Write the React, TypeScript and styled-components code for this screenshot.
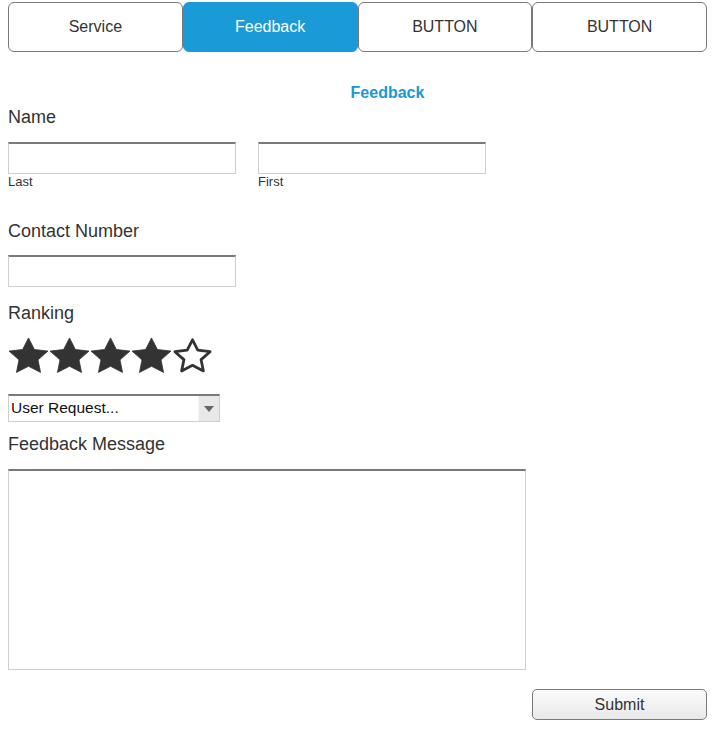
import styled, { createGlobalStyle } from "styled-components";

const GlobalStyle = createGlobalStyle`
  body {
    margin: 0;
    background: #fff;
    font-family: "Liberation Sans", Arial, sans-serif;
    color: #333;
  }
`;

const Page = styled.div`
  padding: 2px 6px 12px 8px;
  width: 699px;
`;

const TabBar = styled.nav`
  display: flex;
`;

const Tab = styled.button<{ $active?: boolean }>`
  flex: 1;
  height: 50px;
  border: 1px solid ${({ $active }) => ($active ? "#1a9bd7" : "#7a7a7a")};
  border-radius: 6px;
  background: ${({ $active }) => ($active ? "#1a9bd7" : "#fff")};
  color: ${({ $active }) => ($active ? "#fff" : "#333")};
  font-family: "Liberation Sans", Arial, sans-serif;
  font-size: 16px;
  padding: 0;
  cursor: pointer;
`;

const Title = styled.h2`
  margin: 31px 0 0;
  padding-left: 60px;
  text-align: center;
  font-size: 16px;
  line-height: 20px;
  font-weight: bold;
  color: #1a98cf;
`;

const Label = styled.div<{ $top: number }>`
  margin-top: ${({ $top }) => $top}px;
  font-size: 18px;
  line-height: 20px;
  color: #333;
`;

const Row = styled.div<{ $top: number }>`
  display: flex;
  gap: 22px;
  margin-top: ${({ $top }) => $top}px;
`;

const Field = styled.div`
  display: flex;
  flex-direction: column;
`;

const TextInput = styled.input`
  box-sizing: border-box;
  width: 228px;
  height: 32px;
  margin: 0;
  border: 1px solid #cfcfcf;
  border-top: 2px solid #7a7a7a;
  background: #fff;
  outline: none;
`;

const SubLabel = styled.span`
  font-size: 13px;
  line-height: 15px;
  color: #333;
`;

const Stars = styled.div`
  display: flex;
  margin-top: 13px;
  height: 39px;
  align-items: flex-start;
`;

const SelectBox = styled.div`
  box-sizing: border-box;
  display: flex;
  width: 212px;
  height: 28px;
  margin-top: 19px;
  border: 1px solid #cfcfcf;
  border-top: 2px solid #7a7a7a;
  background: #fff;
`;

const SelectText = styled.span`
  flex: 1;
  padding-left: 2px;
  font-size: 15.5px;
  line-height: 24px;
  color: #111;
`;

const SelectArrow = styled.span`
  width: 20px;
  display: flex;
  align-items: center;
  justify-content: center;
  background: #e8e8e8;
  border-left: 1px solid #f4f4f4;
`;

const MessageArea = styled.textarea`
  box-sizing: border-box;
  display: block;
  width: 518px;
  height: 201px;
  margin-top: 15px;
  border: 1px solid #cfcfcf;
  border-top: 2px solid #7a7a7a;
  resize: none;
  outline: none;
`;

const Actions = styled.div`
  display: flex;
  justify-content: flex-end;
  margin-top: 19px;
`;

const SubmitButton = styled.button`
  width: 175px;
  height: 31px;
  border: 1px solid #7a7a7a;
  border-radius: 5px;
  background: linear-gradient(#fbfbfb, #e9e9e9);
  font-family: "Liberation Sans", Arial, sans-serif;
  font-size: 16px;
  color: #333;
  cursor: pointer;
`;

// five-pointed star, fat arms like the icon font one
const starPoints = (outer: number, inner: number) => {
  const cx = 20.5;
  const cy = 21;
  const pts: string[] = [];
  for (let i = 0; i < 10; i++) {
    const r = i % 2 === 0 ? outer : inner;
    const a = ((-90 + i * 36) * Math.PI) / 180;
    pts.push(`${(cx + r * Math.cos(a)).toFixed(2)},${(cy + r * 0.93 * Math.sin(a) + (i === 0 ? 0 : 0)).toFixed(2)}`);
  }
  return pts.join(" ");
};

const Star = ({ filled }: { filled: boolean }) => (
  <svg width="41" height="39" viewBox="0 0 41 39">
    {filled ? (
      <polygon
        points={starPoints(20.5, 10)}
        fill="#333"
        stroke="#333"
        strokeWidth={0.8}
        strokeLinejoin="round"
      />
    ) : (
      <polygon
        points={starPoints(18.5, 9)}
        fill="#fff"
        stroke="#333"
        strokeWidth={2.8}
        strokeLinejoin="round"
      />
    )}
  </svg>
);

const tabs = ["Service", "Feedback", "BUTTON", "BUTTON"];

const App = () => {
  const rank = 4;
  return (
    <Page>
      <GlobalStyle />
      <TabBar>
        {tabs.map((t, i) => (
          <Tab key={i} $active={i === 1}>
            {t}
          </Tab>
        ))}
      </TabBar>
      <Title>Feedback</Title>
      <Label $top={4}>Name</Label>
      <Row $top={15}>
        <Field>
          <TextInput />
          <SubLabel>Last</SubLabel>
        </Field>
        <Field>
          <TextInput />
          <SubLabel>First</SubLabel>
        </Field>
      </Row>
      <Label $top={32}>Contact Number</Label>
      <Row $top={14}>
        <TextInput />
      </Row>
      <Label $top={16}>Ranking</Label>
      <Stars>
        {[1, 2, 3, 4, 5].map((n) => (
          <Star key={n} filled={n <= rank} />
        ))}
      </Stars>
      <SelectBox>
        <SelectText>User Request...</SelectText>
        <SelectArrow>
          <svg width="10" height="6" viewBox="0 0 10 6">
            <polygon points="0,0 10,0 5,6" fill="#666" />
          </svg>
        </SelectArrow>
      </SelectBox>
      <Label $top={12}>Feedback Message</Label>
      <MessageArea />
      <Actions>
        <SubmitButton>Submit</SubmitButton>
      </Actions>
    </Page>
  );
};

export default App;
